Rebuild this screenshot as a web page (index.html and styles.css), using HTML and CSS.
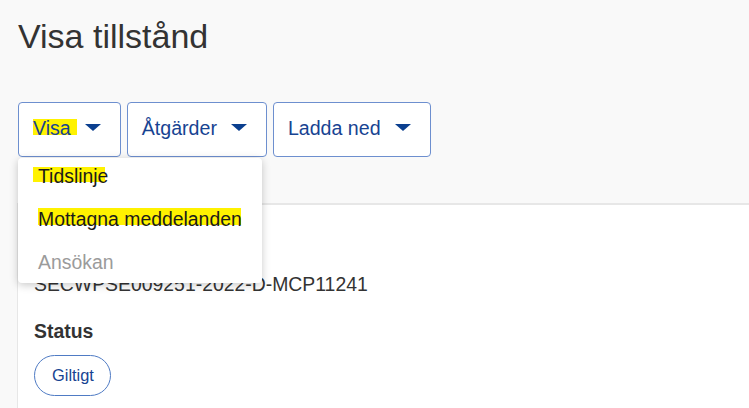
FILE: index.html
```html
<!DOCTYPE html>
<html lang="sv">
<head>
<meta charset="utf-8">
<title>Visa tillstånd</title>
<link rel="stylesheet" href="styles.css">
</head>
<body>
<main class="page">
  <h1 class="title">Visa tillstånd</h1>
  <div class="toolbar">
    <div class="dropdown">
      <button class="btn"><span class="hl hl-visa">Visa</span><svg class="caret" viewBox="0 0 16 7" width="16" height="7"><polygon points="0,0 16,0 8,7"/></svg></button>
      <ul class="menu">
        <li class="item item-first"><span class="hl hl-tid">Tidslinje</span></li>
        <li class="item"><span class="hl hl-mot">Mottagna meddelanden</span></li>
        <li class="item item-last item-disabled">Ansökan</li>
      </ul>
    </div>
    <button class="btn">Åtgärder<svg class="caret" viewBox="0 0 16 7" width="16" height="7"><polygon points="0,0 16,0 8,7"/></svg></button>
    <button class="btn">Ladda ned<svg class="caret" viewBox="0 0 16 7" width="16" height="7"><polygon points="0,0 16,0 8,7"/></svg></button>
  </div>
  <section class="panel">
    <div class="field-value">SECWPSE009251-2022-D-MCP11241</div>
    <div class="field-label status-label">Status</div>
    <span class="pill">Giltigt</span>
  </section>
</main>
</body>
</html>
```

FILE: styles.css
```css
html, body {
  margin: 0;
  padding: 0;
}
body {
  background: #f9f9f9;
  font-family: "Liberation Sans", Arial, sans-serif;
  color: #333;
  width: 749px;
  height: 408px;
  overflow: hidden;
}
.page {
  display: flex;
  flex-direction: column;
  height: 408px;
}
.title {
  margin: 0 0 0 18px;
  padding-top: 16px;
  font-size: 34px;
  line-height: 40px;
  font-weight: normal;
  color: #333;
}
.toolbar {
  display: flex;
  gap: 6px;
  margin: 46px 0 0 18px;
  height: 55px;
}
.dropdown {
  position: relative;
  display: flex;
}
.btn {
  display: flex;
  align-items: center;
  gap: 14px;
  height: 55px;
  box-sizing: border-box;
  padding: 0 19px 4px 14px;
  border: 1px solid #6d8fcf;
  border-radius: 4px;
  background: #fff;
  font-family: "Liberation Sans", Arial, sans-serif;
  font-size: 19.6px;
  line-height: 22px;
  color: #174392;
  cursor: pointer;
}
.caret {
  display: block;
  fill: #0b3f8f;
}
.hl {
  background-image: linear-gradient(#fff200, #fff200);
  background-repeat: no-repeat;
}
.hl-visa {
  background-size: 100% 16px;
  background-position: 0 2px;
  padding-right: 6px;
  margin-right: -6px;
}
.hl-tid {
  padding-left: 5px;
  margin-left: -5px;
  background-size: calc(100% - 3px) 15px;
  background-position: 0 2px;
}
.hl-mot {
  background-size: calc(100% - 1px) 18px;
  background-position: 0 -1px;
}
.menu {
  position: absolute;
  top: 56px;
  left: 0;
  z-index: 10;
  width: 244px;
  margin: 0;
  padding: 0;
  list-style: none;
  background: #fff;
  border-radius: 4px;
  box-shadow: 0 2px 8px rgba(0, 0, 0, 0.22);
}
.item {
  padding: 7px 20px 14px;
  font-size: 19.4px;
  line-height: 22px;
  color: #1b1b1b;
  white-space: nowrap;
}
.item-last {
  padding-bottom: 10px;
}
.item-disabled {
  color: #9b9b9b;
}
.panel {
  flex: 1;
  margin: 46px 0 0 17px;
  background: #fff;
  border-top: 2px solid #e7e7e7;
  border-left: 1px solid #e7e7e7;
  padding: 68px 0 0 16px;
  display: flex;
  flex-direction: column;
  align-items: flex-start;
}
.field-label {
  font-weight: bold;
  font-size: 19.4px;
  line-height: 22px;
  color: #333;
}
.field-value {
  font-size: 19.4px;
  line-height: 22px;
  color: #333;
}
.status-label {
  margin-top: 25px;
}
.pill {
  margin-top: 13px;
  display: inline-flex;
  align-items: center;
  height: 41px;
  box-sizing: border-box;
  padding: 0 16px 1px 17px;
  border: 1.5px solid #4f7bc4;
  border-radius: 21px;
  font-size: 16.4px;
  color: #174392;
}
```
